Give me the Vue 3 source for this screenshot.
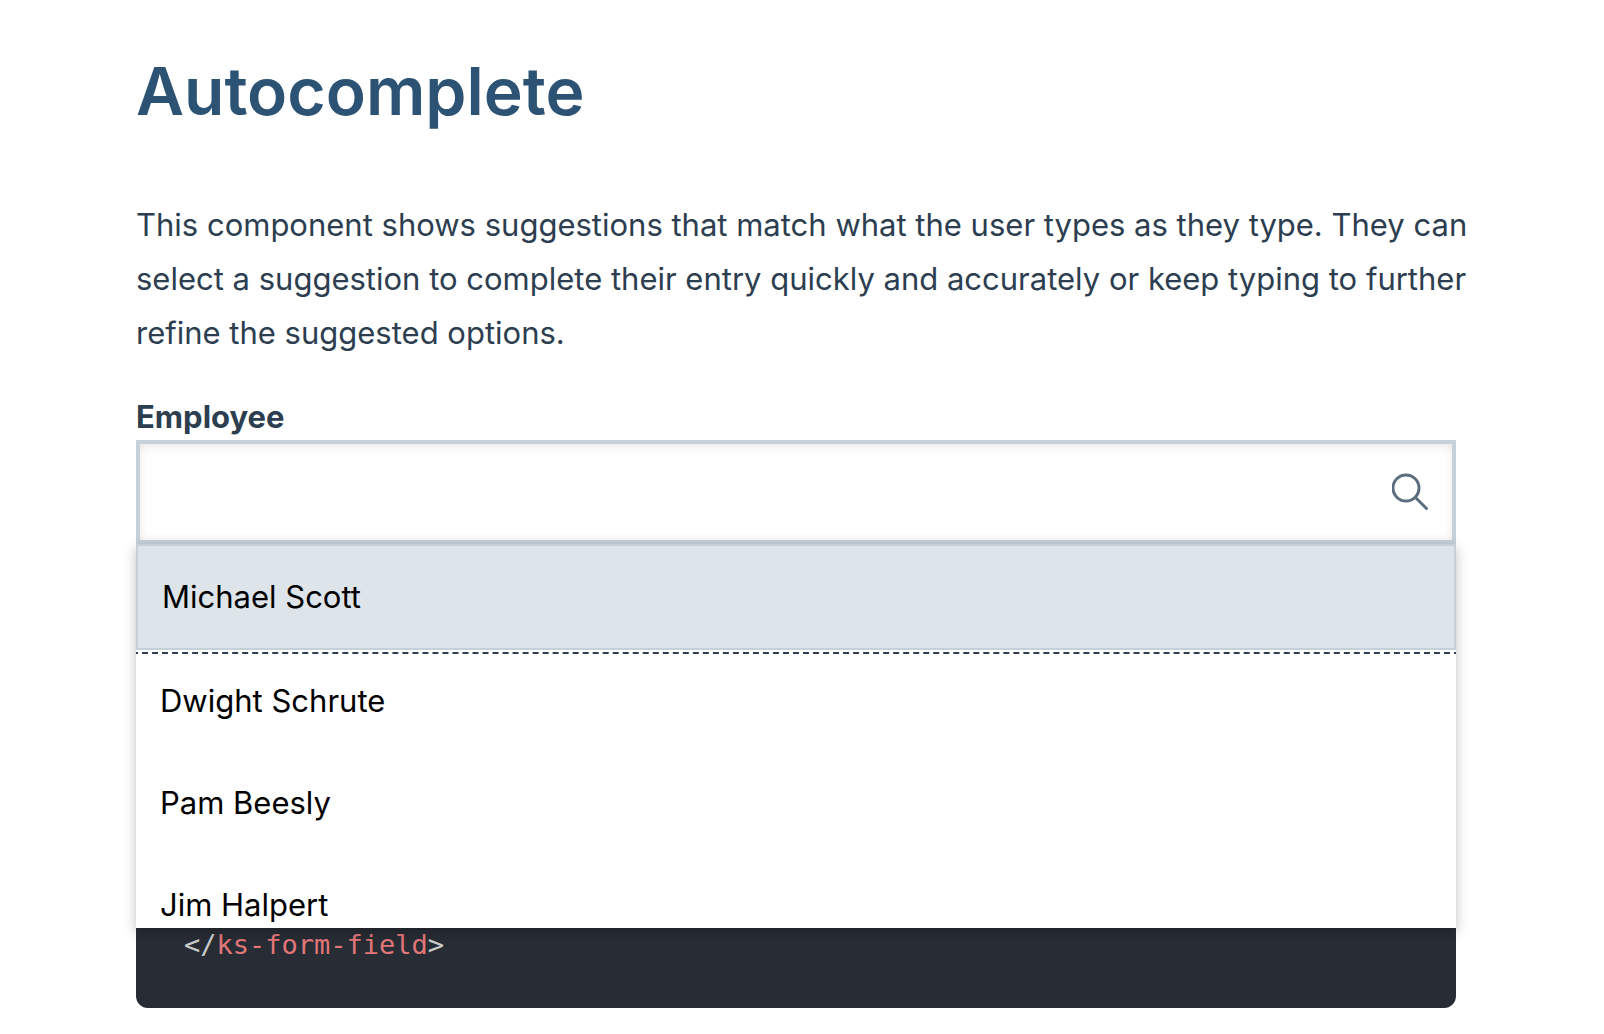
<script setup>
import { ref } from 'vue'

const query = ref('')
const active = ref(0)
const employees = ['Michael Scott', 'Dwight Schrute', 'Pam Beesly', 'Jim Halpert']
</script>

<template>
  <main class="page">
    <h1>Autocomplete</h1>
    <p class="intro">
      This component shows suggestions that match what the user types as they type. They can
      select a suggestion to complete their entry quickly and accurately or keep typing to further
      refine the suggested options.
    </p>

    <div class="field">
      <label for="employee">Employee</label>
      <div class="control">
        <input
          id="employee"
          v-model="query"
          type="text"
          role="combobox"
          aria-expanded="true"
          aria-controls="employee-list"
          autocomplete="off"
        />
        <svg class="icon" viewBox="0 0 40 40" aria-hidden="true">
          <circle cx="14" cy="16" r="13" />
          <path d="M23.5 25.5 L34.5 36.5" />
        </svg>
        <ul id="employee-list" class="menu" role="listbox" aria-label="Employee">
          <li
            v-for="(name, i) in employees"
            :key="name"
            class="option"
            :class="{ active: i === active }"
            role="option"
            :aria-selected="i === active"
            @mouseenter="active = i"
          >{{ name }}</li>
        </ul>
      </div>
    </div>

    <pre class="code"><code>&lt;/<span class="tag">ks-form-field</span>&gt;</code></pre>
  </main>
</template>

<style>
body {
  background: #fff;
}
</style>

<style scoped>
.page {
  box-sizing: border-box;
  padding: 48px 148px 24px 136px;
  font-family: Inter, "Liberation Sans", sans-serif;
  font-size: 31px;
  line-height: 54px;
  color: #2c3e50;
}

h1 {
  margin: 0;
  font-size: 66px;
  line-height: 86px;
  font-weight: 600;
  color: #2c5373;
}

.intro {
  margin: 64px -16px 34px 0;
}

.field label {
  display: block;
  font-weight: 700;
  line-height: 46px;
}

.control {
  position: relative;
}

input {
  display: block;
  box-sizing: border-box;
  width: 100%;
  height: 104px;
  padding: 0 88px 0 24px;
  border: 4px solid #c5d0d8;
  border-radius: 0;
  outline: none;
  background: #fff;
  box-shadow: inset 0 2px 10px rgba(0, 0, 0, 0.1);
  font: inherit;
  color: #000;
}

.icon {
  position: absolute;
  top: 32px;
  right: 24px;
  width: 40px;
  height: 40px;
  fill: none;
  stroke: #5a6e80;
  stroke-width: 3;
  stroke-linecap: round;
}

.menu {
  position: absolute;
  top: 100%;
  left: 0;
  right: 0;
  max-height: 384px;
  margin: 0;
  padding: 0;
  overflow-y: auto;
  scrollbar-width: none;
  list-style: none;
  background: #fff;
  box-shadow: 0 4px 12px rgba(0, 0, 0, 0.25);
  color: #000;
}

.option {
  padding: 24px;
  cursor: pointer;
}

.option.active {
  border: 2px solid #c5d0d8;
  outline: 2px dashed #2c3e50;
  outline-offset: 2px;
  background: #dde4ea;
}

.code {
  margin: 320px 0 0;
  padding: 56px 48px 38px;
  border-radius: 12px;
  background: #282c34;
  font-family: "DejaVu Sans Mono", monospace;
  font-size: 27px;
  line-height: 50px;
  color: #ccc;
}

.code code {
  font: inherit;
}

.tag {
  color: #e2777a;
}
</style>
